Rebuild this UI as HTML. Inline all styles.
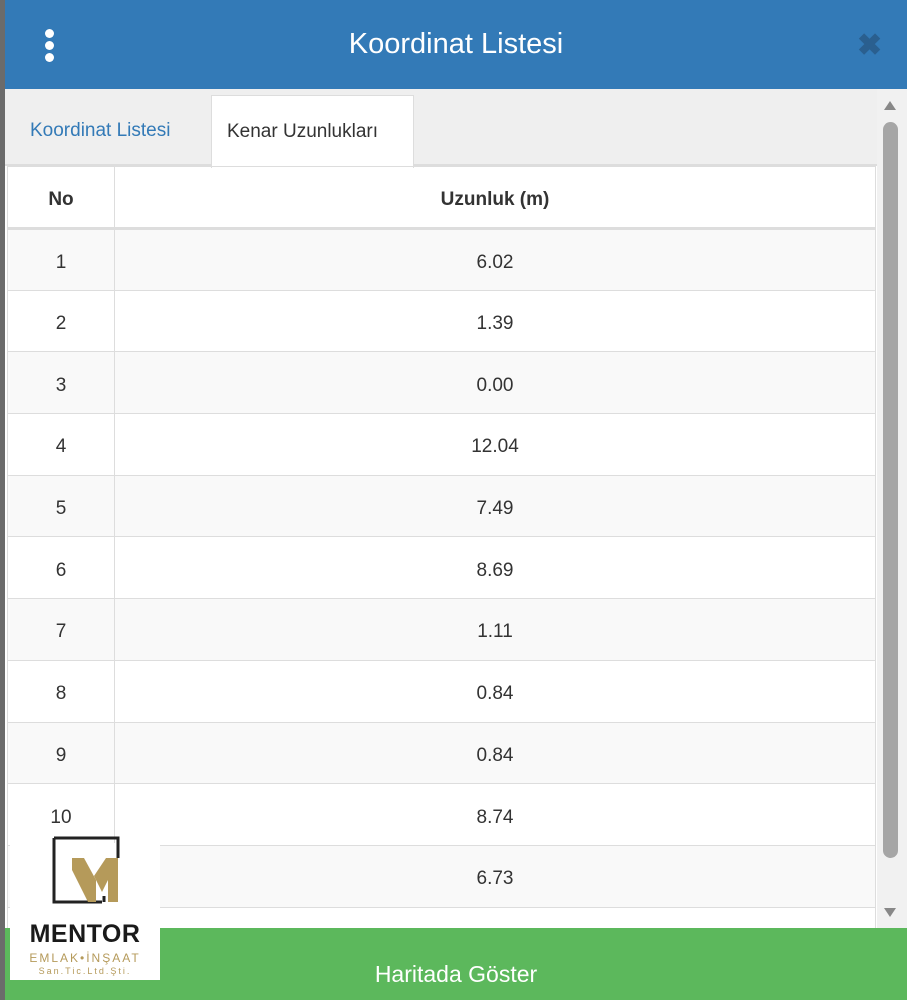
<!DOCTYPE html>
<html><head><meta charset="utf-8"><style>
*{margin:0;padding:0;box-sizing:border-box}
body{width:907px;height:1000px;overflow:hidden;background:#fff;font-family:"Liberation Sans",sans-serif;position:relative}
.left{position:absolute;left:0;top:0;width:5px;height:1000px;background:#6b6b6b}
.hdr{position:absolute;left:5px;top:0;width:902px;height:89px;background:#337ab7;color:#fff}
.hdr .t{position:absolute;left:0;right:0;top:28px;text-align:center;font-size:29px}
.dots{position:absolute;left:40px;top:29px}
.dots i{display:block;width:9px;height:9px;border-radius:50%;background:#fff;margin-bottom:3px}
.x{position:absolute;left:852px;top:28px;font-size:30px;font-weight:bold;color:#2a5f8f}
.tabs{position:absolute;left:5px;top:89px;width:872px;height:77px;background:#efefef;border-bottom:2px solid #ddd}
.tab1{position:absolute;left:25px;top:31px;color:#337ab7;font-size:19px}
.tab2{position:absolute;left:206px;top:6px;width:203px;height:73px;background:#fff;border:1px solid #ddd;border-bottom:none;font-size:19px;color:#333;padding:25px 0 0 15px}
table{position:absolute;left:7px;top:166px;width:869px;border-collapse:collapse;font-size:19px;color:#333}
td,th{border:1px solid #ddd;text-align:center;height:61.7px;padding-top:6px}
th{height:62px;border-bottom:3px solid #ddd;font-weight:bold}
td:first-child,th:first-child{width:107px}
tr:nth-child(even) td{background:#f9f9f9}
.sb{position:absolute;left:877px;top:89px;width:30px;height:839px;background:#f1f1f1}
.thumb{position:absolute;left:883px;top:122px;width:15px;height:736px;border-radius:8px;background:#a6a6a6}
.up,.dn{position:absolute;left:884px;width:0;height:0;border-left:6px solid transparent;border-right:6px solid transparent}
.up{top:101px;border-bottom:9px solid #888}
.dn{top:908px;border-top:9px solid #888}
.btn{position:absolute;left:5px;top:928px;width:902px;height:72px;background:#5cb85c;color:#fff;font-size:23px;text-align:center;padding-top:33px}
.logo{position:absolute;left:10px;top:843px;width:150px;height:137px;background:#fff}
.mentor{position:absolute;left:0;width:150px;top:77px;text-align:center;font-size:25px;font-weight:bold;color:#1a1a1a;letter-spacing:0.5px}
.e{position:absolute;left:0;width:150px;top:108px;text-align:center;font-size:12px;color:#b59a5a;letter-spacing:2px}
.s{position:absolute;left:0;width:150px;top:123px;text-align:center;font-size:9px;color:#b59a5a;letter-spacing:2px}
</style></head><body>
<div class="left"></div>
<div class="hdr"><div class="dots"><i></i><i></i><i></i></div><div class="t">Koordinat Listesi</div><div class="x">✖</div></div>
<div class="tabs"><div class="tab1">Koordinat Listesi</div><div class="tab2">Kenar Uzunlukları</div></div>
<table>
<tr><th>No</th><th>Uzunluk (m)</th></tr>
<tr><td>1</td><td>6.02</td></tr>
<tr><td>2</td><td>1.39</td></tr>
<tr><td>3</td><td>0.00</td></tr>
<tr><td>4</td><td>12.04</td></tr>
<tr><td>5</td><td>7.49</td></tr>
<tr><td>6</td><td>8.69</td></tr>
<tr><td>7</td><td>1.11</td></tr>
<tr><td>8</td><td>0.84</td></tr>
<tr><td>9</td><td>0.84</td></tr>
<tr><td>10</td><td>8.74</td></tr>
<tr><td>11</td><td>6.73</td></tr>
<tr><td>12</td><td></td></tr>
</table>
<div class="sb"></div><div class="thumb"></div><div class="up"></div><div class="dn"></div>
<div class="btn">Haritada Göster</div>
<div class="logo">
<div class="mentor">MENTOR</div>
<div class="e">EMLAK•İNŞAAT</div>
<div class="s">San.Tic.Ltd.Şti.</div>
</div>
<svg style="position:absolute;left:50px;top:836px" width="70" height="70">
<path d="M4,2 H68 V22 M4,2 V66 H52 M54,66 V60" fill="none" stroke="#222" stroke-width="3"/>
<polygon points="22,22 34,22 46,44 46,66 38,66 22,34" fill="#b59a5a"/>
<polygon points="56,22 68,22 68,66 58,66 58,44 52,56 44,40" fill="#b59a5a"/>
</svg>
</body></html>
